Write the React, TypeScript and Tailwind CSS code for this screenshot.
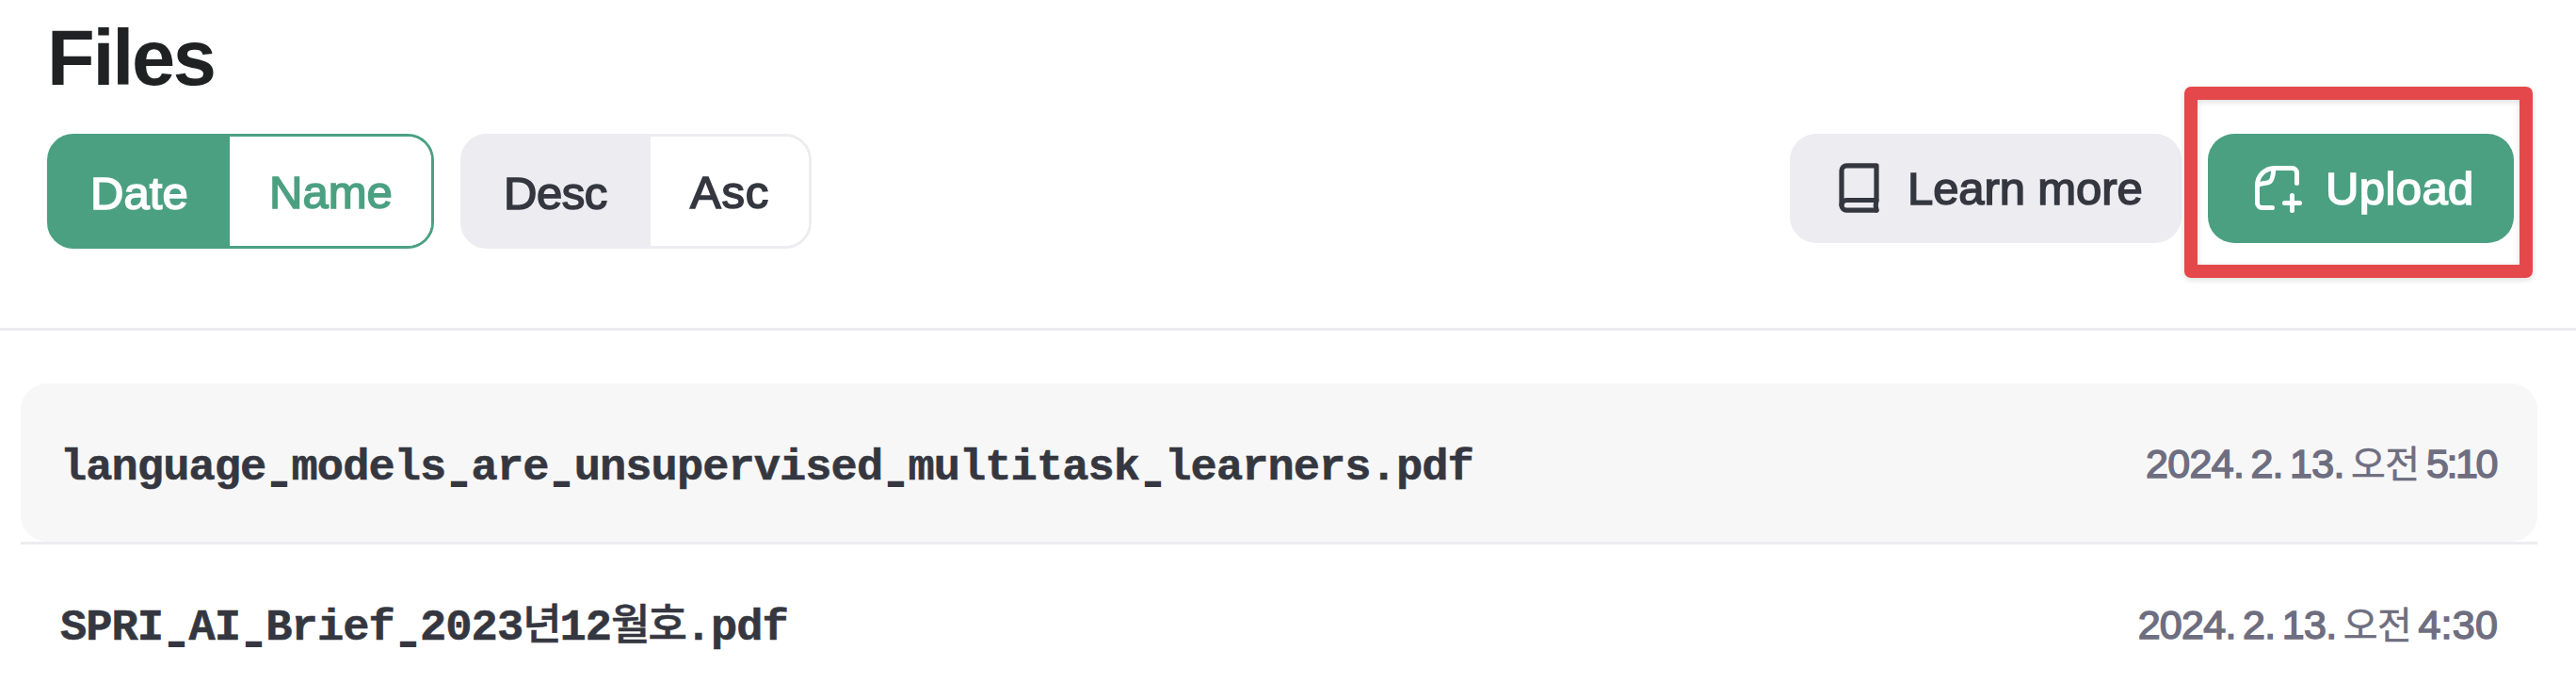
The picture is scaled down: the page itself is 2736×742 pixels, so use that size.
const labelText =
  "text-[49px] leading-[60px] whitespace-nowrap [-webkit-text-stroke:1.6px_currentColor]";

function BookIcon() {
  return (
    <svg
      viewBox="12 12 45 56"
      className="h-[56px] w-[45px] shrink-0"
      fill="none"
      stroke="currentColor"
      strokeWidth="5.2"
      strokeLinecap="round"
      strokeLinejoin="round"
    >
      <path d="M53 52.5V15.8H21.5a5.5 5.5 0 0 0-5.5 5.5V58a5.2 5.2 0 0 0 5.2 5.1H53" />
      <path d="M16 57.8a5.2 5.2 0 0 1 5.2-5.3H53c-1 3.5-1 7 0 10.6" />
    </svg>
  );
}

function FilePlusIcon() {
  return (
    <svg
      viewBox="13 9 52 52"
      className="size-[52px] shrink-0"
      fill="none"
      stroke="currentColor"
      strokeWidth="5"
      strokeLinecap="round"
      strokeLinejoin="round"
    >
      <path d="M33.5 55.5H22.5a5 5 0 0 1-5-5V32C17.5 21.5 25.5 13.5 36 13.5H54.5a5 5 0 0 1 5 5V29.5" />
      <path d="M34.8 14C34.5 20 33.5 27.5 29.5 28.7C25 30 21 29.3 17.5 32" />
      <path d="M54.5 42.5V58.5M46.5 50.5H62.5" />
    </svg>
  );
}

/** File name in monospace, with short underscores and lighter Hangul. */
function FileName({ name }: { name: string }) {
  return (
    <span className="pt-[11px] font-['Liberation_Mono','Noto_Sans_CJK_KR',monospace] text-[47px] leading-[60px] font-bold tracking-[-0.92px] whitespace-nowrap text-[#353740] [-webkit-text-stroke:0.6px_currentColor]">
      {name.split(/(_|[가-힣]+)/).map((part, i) => {
        if (part === "_") {
          return (
            <span
              key={i}
              className="inline-block origin-left translate-x-[7px] translate-y-px scale-x-[0.53] [-webkit-text-stroke:4px_currentColor]"
            >
              _
            </span>
          );
        }
        if (/[가-힣]/.test(part)) {
          return (
            <span key={i} className="text-[45px] font-medium tracking-[-2.1px]">
              {part}
            </span>
          );
        }
        return part;
      })}
    </span>
  );
}

function FileRow({
  name,
  time,
  timeClass,
  className = "",
}: {
  name: string;
  time: string;
  timeClass: string;
  className?: string;
}) {
  return (
    <li className={`flex h-[168px] items-center justify-between px-[42px] ${className}`}>
      <FileName name={name} />
      <span className="pt-[3px] text-[43px] leading-[60px] tracking-[-0.7px] whitespace-nowrap text-[#6e6e80] [-webkit-text-stroke:1.5px_currentColor] [word-spacing:-4px]">
        2024. 2. 13.{" "}
        <span className="text-[40px] tracking-[-0.5px] [-webkit-text-stroke:0.5px_currentColor]">오전</span>{" "}
        <span className={timeClass}>{time}</span>
      </span>
    </li>
  );
}

export default function App() {
  return (
    <main className="h-[742px] w-[2736px] overflow-hidden bg-white font-['Liberation_Sans','Noto_Sans_CJK_KR',sans-serif]">
      <header className="h-[351px] border-b-[3px] border-[#ececf1] pt-[12px] pr-[66px] pl-[50px]">
        <h1 className="text-[83px] leading-[100px] font-bold tracking-[-2.3px] text-[#202123]">Files</h1>
        <div className="mt-[30px] flex items-start justify-between">
          <div className="flex gap-[28px]">
            <div className="flex h-[122px] w-[411px] overflow-hidden rounded-[28px] border-[3px] border-[#4ba082] bg-linear-to-r from-[#4ba082] from-40% to-white to-40%">
              <button className="flex w-[191px] items-center bg-[#4ba082] pt-[4px] pl-[43px] text-white">
                <span className={`${labelText} tracking-[0.1px]`}>Date</span>
              </button>
              <button className="flex flex-1 items-center bg-white pt-[1px] pl-[42px] text-[#4ba082]">
                <span className={labelText}>Name</span>
              </button>
            </div>
            <div className="flex h-[122px] w-[373px] overflow-hidden rounded-[28px] border-[3px] border-[#ececf1] bg-linear-to-r from-[#ececf1] from-40% to-white to-40% text-[#353740]">
              <button className="flex w-[199px] items-center bg-[#ececf1] pt-[4px] pl-[43px]">
                <span className={`${labelText} tracking-[-0.5px]`}>Desc</span>
              </button>
              <button className="flex flex-1 items-center bg-white pt-[1px] pl-[42px]">
                <span className={`${labelText} tracking-[0.8px]`}>Asc</span>
              </button>
            </div>
          </div>
          <div className="flex gap-[28px]">
            <button className="flex h-[116px] w-[416px] items-center gap-[29px] rounded-[28px] bg-[#ececf1] pl-[51px] text-[#353740]">
              <BookIcon />
              <span className={`${labelText} tracking-[-0.1px]`}>Learn more</span>
            </button>
            <div className="relative">
              <button className="flex h-[116px] w-[325px] items-center gap-[25px] rounded-[28px] bg-[#4ba082] pl-[48px] text-white">
                <FilePlusIcon />
                <span className={`${labelText} tracking-[0.4px]`}>Upload</span>
              </button>
              <div className="pointer-events-none absolute top-[-50px] left-[-25px] h-[203px] w-[370px] rounded-[7px] border-[14px] border-[#e5484a] shadow-[0_2px_6px_rgba(0,0,0,0.14),inset_0_2px_6px_rgba(0,0,0,0.14)]" />
            </div>
          </div>
        </div>
      </header>
      <ul className="mt-[56px] mr-[41px] ml-[22px]">
        <FileRow
          className="rounded-[28px] bg-[#f7f7f8]"
          name="language_models_are_unsupervised_multitask_learners.pdf"
          time="5:10"
          timeClass="mr-[2px] tracking-[-2.4px]"
        />
        <li className="h-[3px] bg-[#ececf1]" />
        <FileRow name="SPRI_AI_Brief_2023년12월호.pdf" time="4:30" timeClass="tracking-[0.2px]" />
      </ul>
    </main>
  );
}
